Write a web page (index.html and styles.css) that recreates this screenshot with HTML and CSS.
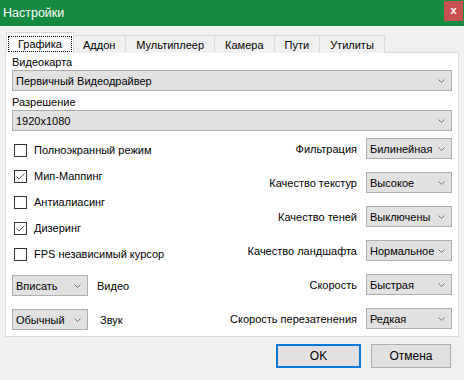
FILE: index.html
```html
<!DOCTYPE html>
<html lang="ru">
    <head>
        <meta charset="UTF-8" />
        <title>Настройки</title>
        <link rel="stylesheet" href="styles.css">
    </head>
    <body>
        <div class="window">
            <div class="titlebar">
                <span class="title">Настройки</span>
                <span class="close">x</span>
            </div>
            <div class="content">
                <div class="tabs">
                    <div class="tab active"><span class="focus">Графика</span></div>
                    <div class="tab">Аддон</div>
                    <div class="tab">Мультиплеер</div>
                    <div class="tab">Камера</div>
                    <div class="tab">Пути</div>
                    <div class="tab">Утилиты</div>
                </div>
                <div class="panel">
                    <div class="field-label">Видеокарта</div>
                    <div class="select">
                        <span>Первичный Видеодрайвер</span>
                        <svg class="chevron" width="7" height="4" viewBox="0 0 7 4"><polyline points="0.5,0.5 3.5,3.5 6.5,0.5" /></svg>
                    </div>
                    <div class="field-label">Разрешение</div>
                    <div class="select">
                        <span>1920x1080</span>
                        <svg class="chevron" width="7" height="4" viewBox="0 0 7 4"><polyline points="0.5,0.5 3.5,3.5 6.5,0.5" /></svg>
                    </div>

                    <div class="options">
                        <div class="col-left">
                            <div class="check">
                                <span class="box"></span>
                                <span>Полноэкранный режим</span>
                            </div>
                            <div class="check">
                                <span class="box"><svg width="11" height="11" viewBox="0 0 11 11"><polyline points="1.5,5.5 4,8 9.5,2.5" /></svg></span>
                                <span>Мип-Маппинг</span>
                            </div>
                            <div class="check">
                                <span class="box"></span>
                                <span>Антиалиасинг</span>
                            </div>
                            <div class="check">
                                <span class="box"><svg width="11" height="11" viewBox="0 0 11 11"><polyline points="1.5,5.5 4,8 9.5,2.5" /></svg></span>
                                <span>Дизеринг</span>
                            </div>
                            <div class="check">
                                <span class="box"></span>
                                <span>FPS независимый курсор</span>
                            </div>

                            <div class="combo-row first">
                                <div class="select small">
                                    <span>Вписать</span>
                                    <svg class="chevron" width="7" height="4" viewBox="0 0 7 4"><polyline points="0.5,0.5 3.5,3.5 6.5,0.5" /></svg>
                                </div>
                                <span class="combo-name">Видео</span>
                            </div>
                            <div class="combo-row">
                                <div class="select small">
                                    <span>Обычный</span>
                                    <svg class="chevron" width="7" height="4" viewBox="0 0 7 4"><polyline points="0.5,0.5 3.5,3.5 6.5,0.5" /></svg>
                                </div>
                                <span class="combo-name sound">Звук</span>
                            </div>
                        </div>

                        <div class="col-right">
                            <div class="combo-row">
                                <span>Фильтрация</span>
                                <div class="select mid">
                                    <span>Билинейная</span>
                                    <svg class="chevron" width="7" height="4" viewBox="0 0 7 4"><polyline points="0.5,0.5 3.5,3.5 6.5,0.5" /></svg>
                                </div>
                            </div>
                            <div class="combo-row">
                                <span>Качество текстур</span>
                                <div class="select mid">
                                    <span>Высокое</span>
                                    <svg class="chevron" width="7" height="4" viewBox="0 0 7 4"><polyline points="0.5,0.5 3.5,3.5 6.5,0.5" /></svg>
                                </div>
                            </div>
                            <div class="combo-row">
                                <span>Качество теней</span>
                                <div class="select mid">
                                    <span>Выключены</span>
                                    <svg class="chevron" width="7" height="4" viewBox="0 0 7 4"><polyline points="0.5,0.5 3.5,3.5 6.5,0.5" /></svg>
                                </div>
                            </div>
                            <div class="combo-row">
                                <span>Качество ландшафта</span>
                                <div class="select mid">
                                    <span>Нормальное</span>
                                    <svg class="chevron" width="7" height="4" viewBox="0 0 7 4"><polyline points="0.5,0.5 3.5,3.5 6.5,0.5" /></svg>
                                </div>
                            </div>
                            <div class="combo-row">
                                <span>Скорость</span>
                                <div class="select mid">
                                    <span>Быстрая</span>
                                    <svg class="chevron" width="7" height="4" viewBox="0 0 7 4"><polyline points="0.5,0.5 3.5,3.5 6.5,0.5" /></svg>
                                </div>
                            </div>
                            <div class="combo-row">
                                <span>Скорость перезатенения</span>
                                <div class="select mid">
                                    <span>Редкая</span>
                                    <svg class="chevron" width="7" height="4" viewBox="0 0 7 4"><polyline points="0.5,0.5 3.5,3.5 6.5,0.5" /></svg>
                                </div>
                            </div>
                        </div>
                    </div>
                </div>

                <div class="buttons">
                    <button class="btn default">OK</button>
                    <button class="btn cancel">Отмена</button>
                </div>
            </div>
        </div>
    </body>
</html>
```

FILE: styles.css
```css
* {
    box-sizing: border-box;
    font-family: "Liberation Sans", Arial, sans-serif;
}
body {
    margin: 0;
    padding: 0;
    background: #f0f0f0;
    color: #000;
    font-size: 11px;
}
.window {
    width: 464px;
    height: 380px;
    background: #f0f0f0;
    overflow: hidden;
}
.titlebar {
    height: 26px;
    background: #148a42;
    display: flex;
    justify-content: space-between;
    align-items: flex-start;
}
.title {
    color: #fff;
    font-size: 12.5px;
    line-height: 26px;
    padding-left: 3px;
}
.close {
    width: 19px;
    height: 20px;
    margin: 1px 1px 0 0;
    background: #c75050;
    color: #fff;
    font-weight: bold;
    font-size: 11px;
    line-height: 18px;
    text-align: center;
}
.content {
    padding: 6px 0 0 0;
}
.tabs {
    display: flex;
    align-items: flex-end;
    height: 21px;
    margin-left: 6px;
}
.tab {
    height: 18px;
    padding: 0 10px;
    border: 1px solid #d9d9d9;
    border-bottom: none;
    margin-left: -1px;
    background: #f0f0f0;
    line-height: 18px;
    white-space: nowrap;
}
.tab.active {
    height: 21px;
    margin-left: 0;
    margin-right: -2px;
    padding: 3px 1px 0 1px;
    background: #fff;
    position: relative;
    z-index: 1;
}
.tab.active + .tab {
    margin-left: 0;
}
.focus {
    display: block;
    border: 1px dotted #000;
    padding: 0 9px;
    line-height: 14px;
}
.panel {
    margin: -1px 5px 0 5px;
    border: 1px solid #d9d9d9;
    background: #fff;
    padding: 2px 6px 6px 6px;
}
.field-label {
    line-height: 15px;
}
.select + .field-label {
    margin-top: 4px;
}
.select {
    display: flex;
    justify-content: space-between;
    align-items: center;
    height: 21px;
    border: 1px solid #adadad;
    background: #e1e1e1;
    padding: 0 6px 0 3px;
    white-space: nowrap;
}
.chevron {
    flex-shrink: 0;
    fill: none;
    stroke: #707070;
    stroke-width: 1;
}
.select.small {
    width: 76px;
}
.select.mid {
    width: 86px;
}
.options {
    display: flex;
    justify-content: space-between;
    margin-top: 6px;
}
.col-left {
    display: flex;
    flex-direction: column;
}
.check {
    display: flex;
    align-items: center;
    gap: 7px;
    height: 26px;
    padding-left: 2px;
}
.box {
    width: 13px;
    height: 13px;
    border: 1px solid #333;
    background: #fff;
    display: flex;
}
.box svg {
    fill: none;
    stroke: #555;
    stroke-width: 1;
}
.col-right {
    display: flex;
    flex-direction: column;
    align-items: flex-end;
    gap: 13px;
    padding-top: 1px;
}
.combo-row {
    display: flex;
    align-items: center;
    gap: 9px;
}
.col-left .combo-row {
    margin-top: 13px;
}
.col-left .combo-row.first {
    margin-top: 8px;
}
.combo-name.sound {
    margin-left: 3px;
}
.buttons {
    display: flex;
    justify-content: flex-end;
    gap: 10px;
    margin-top: 7px;
    padding-right: 13px;
}
.btn {
    height: 24px;
    border: 1px solid #adadad;
    background: #e1e1e1;
    font-size: 12px;
    color: #000;
    padding: 0;
}
.btn.default {
    width: 85px;
    border: 2px solid #0078d7;
}
.btn.cancel {
    width: 80px;
}
```
